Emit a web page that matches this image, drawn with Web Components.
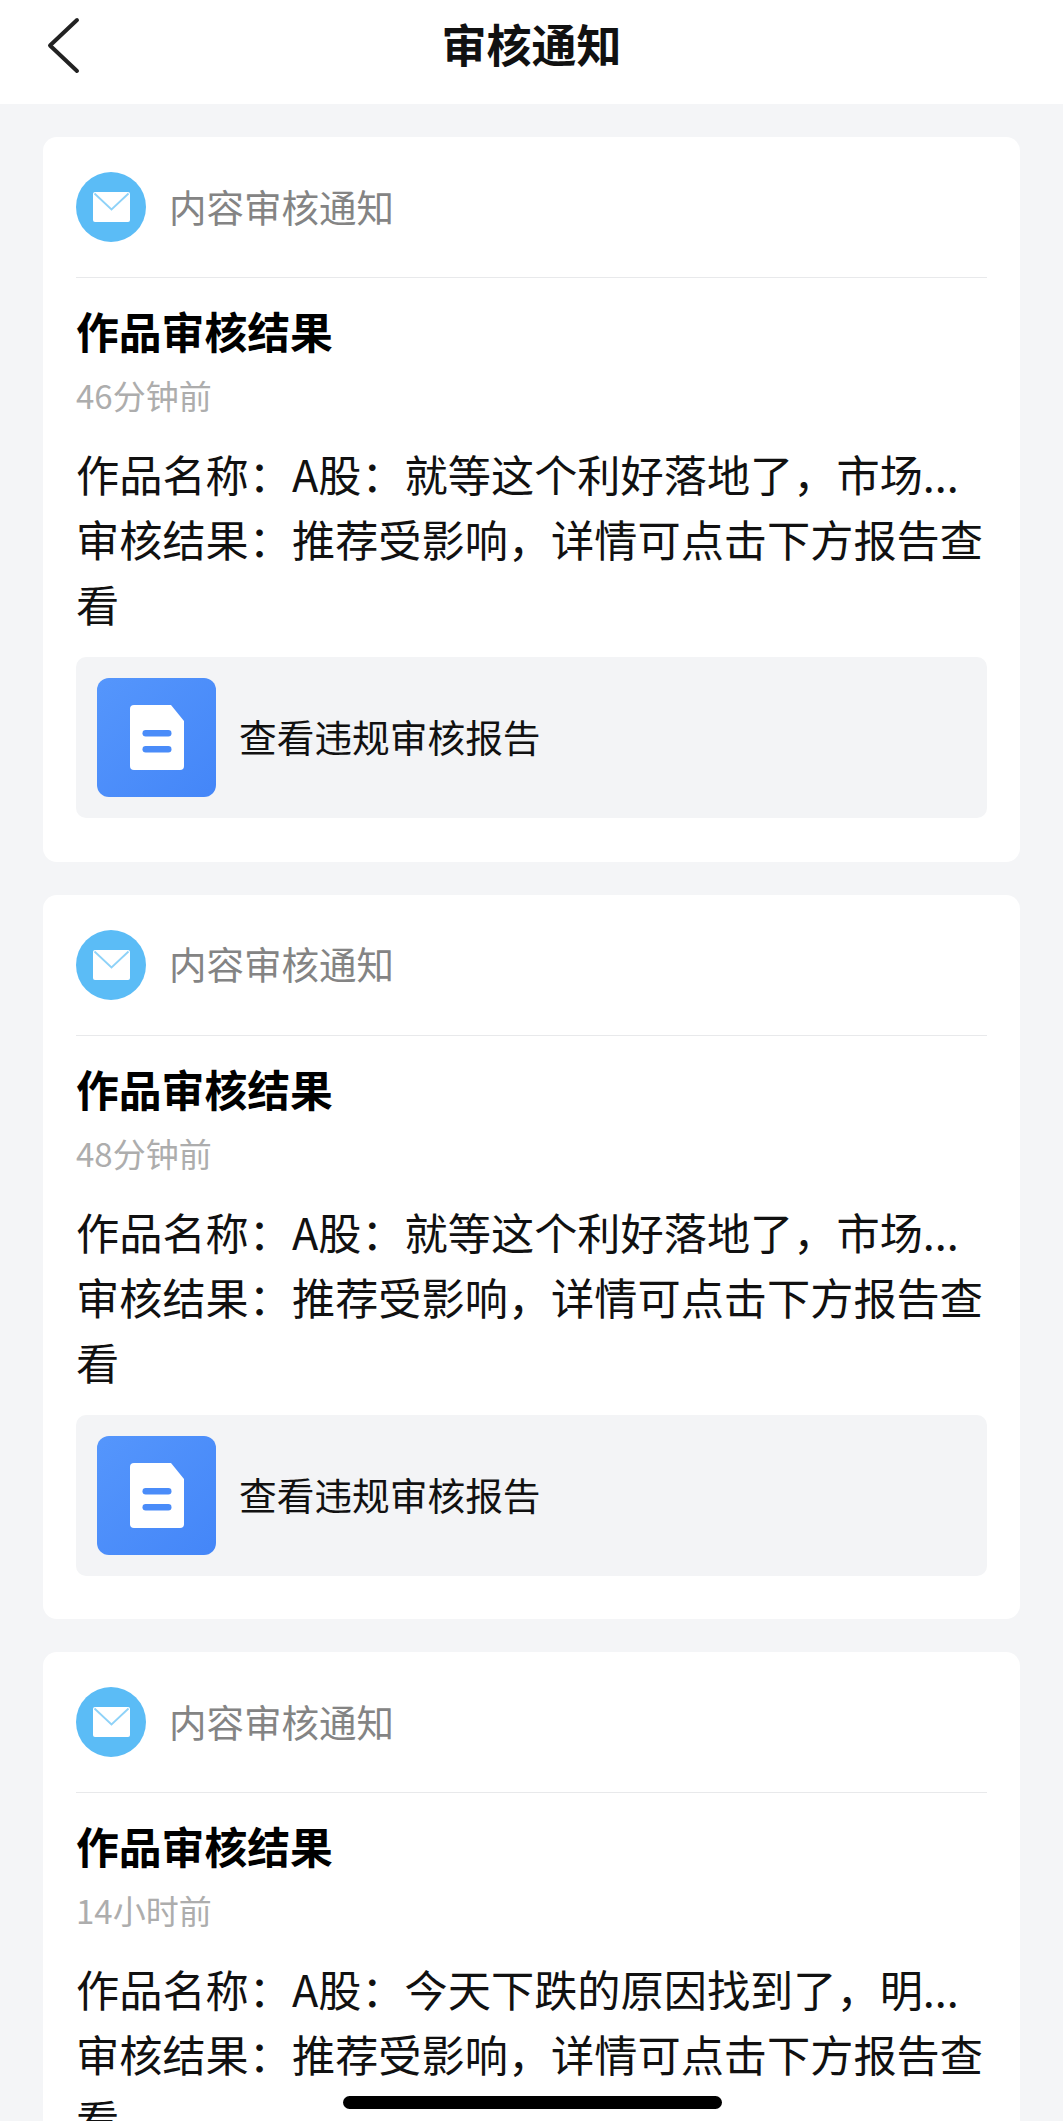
<!DOCTYPE html>
<html lang="zh">
<head>
<meta charset="utf-8">
<title>审核通知</title>
<style>
  html, body {
    margin: 0;
    padding: 0;
    height: 2121px;
    overflow: hidden;
    background: #f4f5f7;
    font-family: "Noto Sans CJK SC", "Liberation Sans", sans-serif;
  }
</style>
</head>
<body>
<nav-bar>审核通知</nav-bar>
<audit-list>
  <audit-card time="46分钟前" work="A股：就等这个利好落地了，市场..."></audit-card>
  <audit-card time="48分钟前" work="A股：就等这个利好落地了，市场..."></audit-card>
  <audit-card time="14小时前" work="A股：今天下跌的原因找到了，明..."></audit-card>
</audit-list>
<home-indicator></home-indicator>

<script>
const navBarTemplate = document.createElement('template')
navBarTemplate.innerHTML = `
  <style>
    :host {
      display: flex;
      align-items: center;
      justify-content: center;
      position: relative;
      height: 104px;
      padding-bottom: 17px;
      box-sizing: border-box;
      background: #fff;
      color: #111;
      font-size: 45px;
      font-weight: 700;
    }
    svg {
      position: absolute;
      left: 46px;
      top: 16px;
    }
  </style>
  <svg width="36" height="58" viewBox="0 0 36 58" fill="none" stroke="#222" stroke-width="4" stroke-linecap="round" stroke-linejoin="round">
    <path d="M31 4 L4 29.5 L31 55"/>
  </svg>
  <slot></slot>
`
class NavBar extends HTMLElement {
  constructor() {
    super()
    this.attachShadow({ mode: 'open' }).append(navBarTemplate.content.cloneNode(true))
  }
}
customElements.define('nav-bar', NavBar)

const auditListTemplate = document.createElement('template')
auditListTemplate.innerHTML = `
  <style>
    :host {
      display: flex;
      flex-direction: column;
      gap: 33px;
      padding: 33px 43px 0;
    }
  </style>
  <slot></slot>
`
class AuditList extends HTMLElement {
  constructor() {
    super()
    this.attachShadow({ mode: 'open' }).append(auditListTemplate.content.cloneNode(true))
  }
}
customElements.define('audit-list', AuditList)

const reportLinkTemplate = document.createElement('template')
reportLinkTemplate.innerHTML = `
  <style>
    :host {
      display: flex;
      align-items: center;
      gap: 23px;
      height: 161px;
      padding: 0 21px;
      box-sizing: border-box;
      border-radius: 10px;
      background: #f3f4f6;
      color: #111;
      font-size: 37.7px;
    }
    .icon {
      flex: none;
      display: flex;
      align-items: center;
      justify-content: center;
      width: 119px;
      height: 119px;
      border-radius: 12px;
      background: linear-gradient(135deg, #5596fc, #4486f8);
    }
    svg { margin-left: 1px; }
    span { padding-bottom: 4px; }
  </style>
  <div class="icon">
    <svg width="54" height="65" viewBox="0 0 54 65">
      <path d="M4 0 H41 L54 16 V61 a4 4 0 0 1 -4 4 H4 a4 4 0 0 1 -4 -4 V4 a4 4 0 0 1 4 -4 Z" fill="#fff"/>
      <rect x="12.5" y="25" width="29" height="6.5" rx="3.2" fill="#4a8cf9"/>
      <rect x="12.5" y="41" width="29" height="6.5" rx="3.2" fill="#4a8cf9"/>
    </svg>
  </div>
  <span><slot></slot></span>
`
class ReportLink extends HTMLElement {
  constructor() {
    super()
    this.attachShadow({ mode: 'open' }).append(reportLinkTemplate.content.cloneNode(true))
  }
}
customElements.define('report-link', ReportLink)

const auditCardTemplate = document.createElement('template')
auditCardTemplate.innerHTML = `
  <style>
    :host {
      display: block;
      padding: 35px 33px 43.5px;
      border-radius: 14px;
      background: #fff;
    }
    .source {
      display: flex;
      align-items: center;
      gap: 23px;
      padding-bottom: 35px;
      border-bottom: 1px solid #e8e9eb;
      color: #848484;
      font-size: 37.5px;
    }
    .source span { padding-bottom: 4px; }
    .avatar {
      flex: none;
      display: flex;
      align-items: center;
      justify-content: center;
      width: 70px;
      height: 70px;
      border-radius: 50%;
      background: #5bbcf6;
    }
    h2 {
      margin: 22px 0 0;
      color: #000;
      font-size: 42.8px;
      font-weight: 700;
      line-height: 60px;
    }
    .time {
      margin-top: 15px;
      color: #adadad;
      font-size: 33px;
      line-height: 40px;
    }
    .body {
      margin-top: 26px;
      color: #111;
      font-size: 43.2px;
      line-height: 65px;
    }
    report-link { margin-top: 21px; }
  </style>
  <div class="source">
    <div class="avatar">
      <svg width="37" height="30" viewBox="0 0 37 30">
        <rect width="37" height="30" rx="2" fill="#fff"/>
        <path d="M1.5 1.5 L18.5 17.5 L35.5 1.5" fill="none" stroke="#8ed2f8" stroke-width="1.8"/>
      </svg>
    </div>
    <span>内容审核通知</span>
  </div>
  <h2>作品审核结果</h2>
  <div class="time"></div>
  <div class="body">
    <div class="work"></div>
    <div>审核结果：推荐受影响，详情可点击下方报告查看</div>
  </div>
  <report-link>查看违规审核报告</report-link>
`
class AuditCard extends HTMLElement {
  constructor() {
    super()
    const shadow = this.attachShadow({ mode: 'open' })
    shadow.append(auditCardTemplate.content.cloneNode(true))
    shadow.querySelector('.time').textContent = this.getAttribute('time')
    shadow.querySelector('.work').textContent = '作品名称：' + this.getAttribute('work')
  }
}
customElements.define('audit-card', AuditCard)

const homeIndicatorTemplate = document.createElement('template')
homeIndicatorTemplate.innerHTML = `
  <style>
    :host {
      position: fixed;
      left: 343px;
      top: 2096px;
      width: 379px;
      height: 13px;
      border-radius: 7px;
      background: #000;
    }
  </style>
`
class HomeIndicator extends HTMLElement {
  constructor() {
    super()
    this.attachShadow({ mode: 'open' }).append(homeIndicatorTemplate.content.cloneNode(true))
  }
}
customElements.define('home-indicator', HomeIndicator)
</script>
</body>
</html>
